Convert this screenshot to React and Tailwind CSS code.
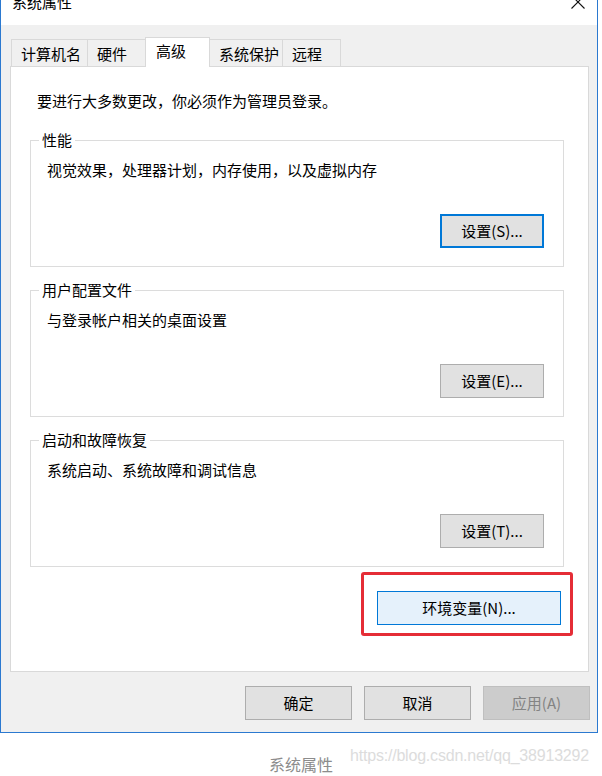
import React from 'react'

const TABS = [
  { key: 'name', label: '计算机名', w: 'w-[77px]' },
  { key: 'hw', label: '硬件', w: 'w-[59px]' },
  { key: 'adv', label: '高级', w: 'w-[65px]', active: true },
  { key: 'prot', label: '系统保护', w: 'w-[74px]' },
  { key: 'remote', label: '远程', w: 'w-[59px]' },
]

const GROUPS = [
  { title: '性能', desc: '视觉效果，处理器计划，内存使用，以及虚拟内存', btn: '设置(S)...', isDefault: true },
  { title: '用户配置文件', desc: '与登录帐户相关的桌面设置', btn: '设置(E)...' },
  { title: '启动和故障恢复', desc: '系统启动、系统故障和调试信息', btn: '设置(T)...' },
]

function WinButton({ children, variant = 'normal', className = '' }) {
  const styles = {
    normal: 'border border-[#adadad] bg-[#e1e1e1] text-black',
    default: 'border-2 border-[#0078d7] bg-[#e1e1e1] text-black',
    hover: 'border border-[#0078d7] bg-[#e5f1fb] text-black',
    disabled: 'border border-[#bfbfbf] bg-[#cccccc] text-[#838383]',
  }
  return (
    <button
      type="button"
      className={`flex h-[34px] items-center justify-center text-[15px] leading-[20px] ${styles[variant]} ${className}`}
    >
      {children}
    </button>
  )
}

function Group({ title, desc, btn, isDefault }) {
  return (
    <fieldset className="w-[534px] border border-[#dcdcdc]">
      <legend className="ml-[8px] px-[3px] text-[15px] leading-[20px] text-black">{title}</legend>
      <div className="pl-[16px] pr-[19px] pb-[18px]">
        <p className="mt-[10px] text-[15px] leading-[20px] text-black">{desc}</p>
        <div className="mt-[34px] flex justify-end">
          <WinButton variant={isDefault ? 'default' : 'normal'} className="w-[104px]">
            {btn}
          </WinButton>
        </div>
      </div>
    </fieldset>
  )
}

export default function App() {
  return (
    <div className="relative h-[776px] w-[602px] overflow-hidden bg-white font-['Noto_Sans_CJK_SC','Microsoft_YaHei',sans-serif]">
      {/* dialog window */}
      <div className="h-[733px] w-[598px] border-x border-b border-[#2b79d0] bg-[#f0f0f0]">
        {/* title bar */}
        <div className="flex h-[25px] items-start justify-between overflow-hidden bg-white pl-[11px] pr-[12px]">
          <span className="-mt-[8px] text-[15px] leading-[20px] text-black">系统属性</span>
          <svg width="14" height="14" viewBox="0 0 14 14" className="-mt-[5px]">
            <path d="M0.5 0.5 L13.5 13.5 M13.5 0.5 L0.5 13.5" stroke="#111" strokeWidth="1.1" fill="none" />
          </svg>
        </div>

        <div className="px-[9px] pt-[12px]">
          {/* tabs */}
          <div className="flex h-[29px] items-end pl-[1px]">
            {TABS.map((t) =>
              t.active ? (
                <div
                  key={t.key}
                  className={`relative z-10 -mb-px -ml-px h-[30px] ${t.w} border-x border-t border-[#d9d9d9] bg-white pl-[10px] pt-[3px] text-[15px] leading-[20px] text-black`}
                >
                  {t.label}
                </div>
              ) : (
                <div
                  key={t.key}
                  className={`-ml-px h-[27px] ${t.w} border-x border-t border-[#d9d9d9] bg-[#f0f0f0] pl-[9px] pt-[4px] text-[15px] leading-[20px] text-black first:ml-0`}
                >
                  {t.label}
                </div>
              )
            )}
          </div>

          {/* tab panel */}
          <div className="h-[606px] w-[579px] border border-[#d9d9d9] bg-white pt-[24px]">
            <p className="pl-[26px] text-[15px] leading-[20px] text-black">
              要进行大多数更改，你必须作为管理员登录。
            </p>
            <div className="ml-[19px] mt-[19px] flex flex-col gap-[13px]">
              {GROUPS.map((g) => (
                <Group key={g.title} {...g} />
              ))}
            </div>
            <div className="mr-[15px] mt-[5px] flex justify-end">
              <div className="h-[64px] w-[212px] rounded-[3px] border-[3px] border-[#e52d36] pl-[13px] pt-[16px]">
                <WinButton variant="hover" className="w-[184px]">
                  环境变量(N)...
                </WinButton>
              </div>
            </div>
          </div>

          {/* dialog buttons */}
          <div className="-mr-[2px] mt-[14px] flex justify-end gap-[12px]">
            <WinButton className="w-[107px]">确定</WinButton>
            <WinButton className="w-[107px]">取消</WinButton>
            <WinButton variant="disabled" className="w-[107px]">应用(A)</WinButton>
          </div>
        </div>
      </div>

      {/* caption */}
      <p className="mt-[21px] text-center text-[16px] leading-[20px] text-[#8c8c8c]">系统属性</p>

      {/* watermark */}
      <span className="absolute left-[350px] top-[746px] font-['Liberation_Sans',sans-serif] text-[16px] leading-[20px] tracking-[-0.2px] text-[#dcdcdc]">
        https://blog.csdn.net/qq_38913292
      </span>
    </div>
  )
}
